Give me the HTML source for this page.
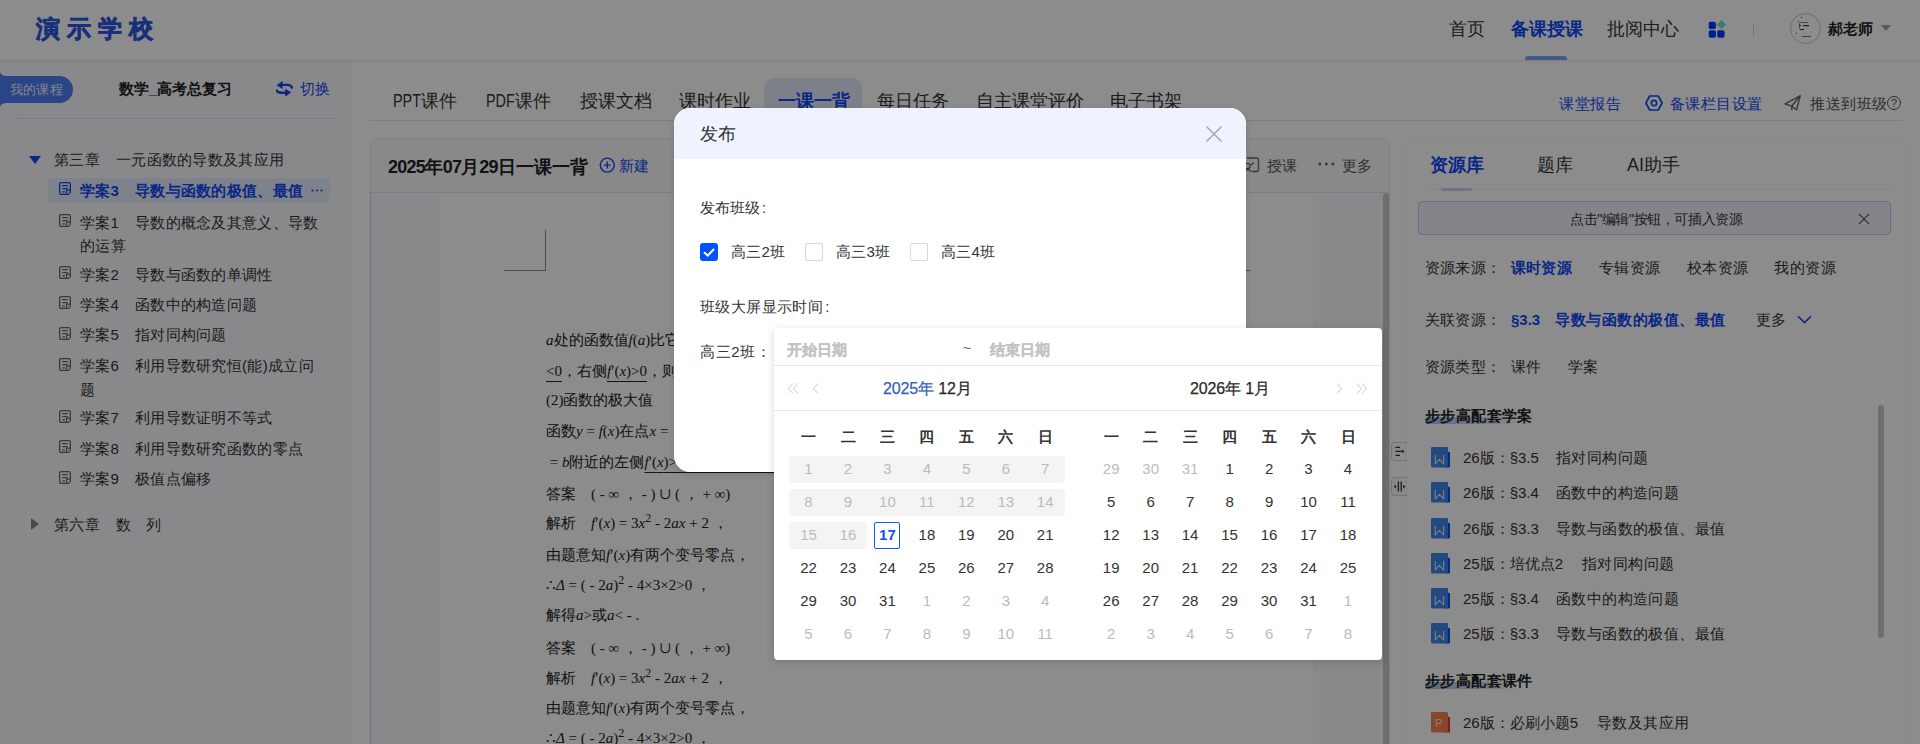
<!DOCTYPE html>
<html><head><meta charset="utf-8">
<style>
*{box-sizing:border-box;margin:0;padding:0}
html,body{width:1920px;height:744px;overflow:hidden}
body{position:relative;background:#fff;font-family:"Liberation Sans",sans-serif;color:#333;font-size:15px;line-height:1}
.a{position:absolute;white-space:nowrap;line-height:1}
.hdr{position:absolute;left:0;top:0;width:1920px;height:60px;background:#fff;box-shadow:0 1px 3px rgba(0,0,0,.10);z-index:2}
.bold{font-weight:bold}
.side{position:absolute;left:0;top:60px;width:352px;height:684px;background:#f9fafe}
.mask{position:absolute;left:0;top:0;width:1920px;height:744px;background:rgba(0,0,0,.45);z-index:10}
.tree .a{font-size:15px;color:#333;letter-spacing:.3px}
.ic{position:absolute;width:12px;height:13px}
.card{position:absolute;left:370px;top:138px;width:1020px;height:640px;background:#f9f9fb;border-radius:8px;border:1px solid #eef0f4}
.doc{position:absolute;left:370px;top:192px;width:1020px;height:560px;background:#f8f9fd;border-top:1px solid #dfe6f2}
.page{position:absolute;left:440px;top:193px;width:873px;height:560px;background:#fff}
.dl{position:absolute;left:546px;font-size:15px;color:#222;white-space:nowrap;line-height:1;font-family:"Liberation Serif",serif}
.dl i{font-family:"Liberation Serif",serif}
.rp{position:absolute;left:1407px;top:138px;width:498px;height:620px;background:#fff;border-radius:8px;box-shadow:0 0 4px rgba(0,0,0,.06)}
.rl .a{font-size:15px;color:#333}
.wd{position:absolute;left:1431px;width:18px;height:20px}
.modal{position:absolute;left:674px;top:108px;width:572px;height:364px;background:#fff;border-radius:16px;z-index:11;overflow:hidden;box-shadow:0 2px 6px rgba(0,0,0,.12)}
.mh{position:absolute;left:0;top:0;width:572px;height:51px;background:#eef3fe}
.cb{position:absolute;width:18px;height:18px;border:1px solid #d9d9d9;border-radius:2px;background:#fff}
.dp{position:absolute;left:774px;top:328px;width:608px;height:332px;background:#fff;border-radius:4px;z-index:12;box-shadow:0 2px 8px rgba(0,0,0,.15)}
.dp .a{font-size:15px}
.wk{font-weight:bold;color:#333}
.dis{color:#bbb}
.dn{color:#333}
.b,.tree .b,.rl .b,.dp .b{color:#1249f5}
.nl{display:inline-block;transform:scaleX(.8);transform-origin:0 0;margin-right:-7px}
.nd{letter-spacing:-.8px}
.dl sup{vertical-align:0;position:relative;top:-.5em;font-size:.8em;line-height:0}
.dl u{text-decoration-thickness:1.3px;text-underline-offset:4.5px}
</style></head><body>
<div class="hdr">
  <div class="a bold" style="left:36px;top:17px;font-size:24px;letter-spacing:7px;font-weight:900;-webkit-text-stroke:.7px #2c56e0;color:#2c56e0">演示学校</div>
  <div class="a" style="left:1449px;top:20px;font-size:18px;color:#333">首页</div>
  <div class="a b bold" style="left:1511px;top:20px;font-size:18px">备课授课</div>
  <div class="a" style="left:1525px;top:56px;width:42px;height:4px;background:#7fa0ff;border-radius:3px 3px 0 0"></div>
  <div class="a" style="left:1607px;top:20px;font-size:18px;color:#333">批阅中心</div>
  <svg class="a" style="left:1708px;top:20px" width="19" height="19" viewBox="0 0 19 19">
    <rect x="0.7" y="1.7" width="7.2" height="7.3" rx="1.8" fill="#0037ff"/>
    <rect x="0.7" y="10.3" width="7.2" height="7.5" rx="1.8" fill="#0037ff"/>
    <rect x="9.2" y="10.3" width="7.4" height="7.5" rx="1.8" fill="#0037ff"/>
    <path d="M13.4 0.4L17.6 4.6L13.4 8.8L9.2 4.6Z" fill="#6ee0cc" stroke="#6ee0cc" stroke-width="1" stroke-linejoin="round"/>
  </svg>
  <div class="a" style="left:1753px;top:23px;width:1px;height:14px;background:#c8d4ee"></div>
  <div class="a" style="left:1790px;top:13px;width:31px;height:31px;border:1px solid #b9c6e8;border-radius:50%;background:#fff"></div>
  <svg class="a" style="left:1793px;top:16px" width="26" height="26" viewBox="0 0 26 26"><g fill="#333"><rect x="8" y="1" width="1" height="1"/><rect x="5" y="5" width="1" height="1"/><rect x="7" y="6" width="8" height="1" opacity=".6"/><rect x="6" y="9" width="2" height="1"/><rect x="10" y="9" width="6" height="1.2"/><rect x="7" y="13" width="4" height="1"/><rect x="3" y="17" width="1" height="1"/><rect x="9" y="20" width="9" height="1" opacity=".7"/><rect x="6" y="7" width="1" height="6" opacity=".5"/></g></svg>
  <div class="a bold" style="left:1828px;top:21px;font-size:15px;color:#222">郝老师</div>
  <svg class="a" style="left:1881px;top:25px" width="10" height="6" viewBox="0 0 10 6"><path d="M0 0H10L5 6Z" fill="#9aa3b5"/></svg>
</div>

<div class="side"></div>
  <svg class="a" style="left:0;top:72px" width="74" height="35" viewBox="0 0 74 35">
    <path d="M0 0 Q1 4 7 4 H59.5 A13.5 13.5 0 0 1 59.5 31 H7 Q1 31 0 35Z" fill="#4b7ef5"/>
  </svg>
  <div class="a" style="left:10px;top:83px;font-size:13px;color:#eef2fc;letter-spacing:.2px">我的课程</div>
  <div class="a bold" style="left:119px;top:81px;font-size:15px;color:#222">数学_高考总复习</div>
  <svg class="a" style="left:276px;top:80px" width="17" height="17" viewBox="0 0 17 17">
    <path d="M0.5 5.3L6.6 0.9V8.9Z" fill="#1249f5"/><path d="M6 4.9H11.5Q15 5 15.9 7.6" fill="none" stroke="#1249f5" stroke-width="2.4" stroke-linecap="round"/>
    <path d="M15.3 12.3L9.2 8.8V16.8Z" fill="#1249f5"/><path d="M0.6 10.6Q1.5 12.6 5 12.7H10" fill="none" stroke="#1249f5" stroke-width="2.4" stroke-linecap="round"/>
  </svg>
  <div class="a b" style="left:300px;top:81px;font-size:15px">切换</div>
  <div class="a" style="left:17px;top:118px;width:319px;height:1px;background:#dde5f3"></div>
<div class="tree">
<svg class="a" style="left:29px;top:156px" width="12" height="8" viewBox="0 0 12 8"><path d="M0 0H12L6 8Z" fill="#1249f5"/></svg>
<div class="a" style="left:54px;top:152px">第三章</div><div class="a" style="left:116px;top:152px">一元函数的导数及其应用</div>
<div class="a" style="left:48px;top:178px;width:282px;height:25px;background:#e6edfb;border-radius:4px"></div>
<div class="a b bold" style="left:80px;top:183px">学案3</div><div class="a b bold" style="left:135px;top:183px">导数与函数的极值、最值</div>
<svg class="a" style="left:59px;top:182px" width="12" height="13" viewBox="0 0 12 13"><path d="M7.3 12.35H2.15Q0.65 12.35 0.65 10.85V2.15Q0.65 0.65 2.15 0.65H9.85Q11.35 0.65 11.35 2.15V8.3" fill="none" stroke="#1249f5" stroke-width="1.3"/><path d="M3.2 3.6H8.8M3.2 6.6H8.8M3.2 9.8H6" stroke="#1249f5" stroke-width="1.2"/><path d="M7.6 8.2H11.35V10.6L9.4 12.35H7.6Z" fill="none" stroke="#1249f5" stroke-width="1.2"/></svg>
<div class="a" style="left:80px;top:215px">学案1</div><div class="a" style="left:135px;top:215px">导数的概念及其意义、导数</div>
<svg class="a" style="left:59px;top:214px" width="12" height="13" viewBox="0 0 12 13"><path d="M7.3 12.35H2.15Q0.65 12.35 0.65 10.85V2.15Q0.65 0.65 2.15 0.65H9.85Q11.35 0.65 11.35 2.15V8.3" fill="none" stroke="#666" stroke-width="1.3"/><path d="M3.2 3.6H8.8M3.2 6.6H8.8M3.2 9.8H6" stroke="#666" stroke-width="1.2"/><path d="M7.6 8.2H11.35V10.6L9.4 12.35H7.6Z" fill="none" stroke="#666" stroke-width="1.2"/></svg>
<div class="a" style="left:80px;top:238px">的运算</div>
<div class="a" style="left:80px;top:267px">学案2</div><div class="a" style="left:135px;top:267px">导数与函数的单调性</div>
<svg class="a" style="left:59px;top:266px" width="12" height="13" viewBox="0 0 12 13"><path d="M7.3 12.35H2.15Q0.65 12.35 0.65 10.85V2.15Q0.65 0.65 2.15 0.65H9.85Q11.35 0.65 11.35 2.15V8.3" fill="none" stroke="#666" stroke-width="1.3"/><path d="M3.2 3.6H8.8M3.2 6.6H8.8M3.2 9.8H6" stroke="#666" stroke-width="1.2"/><path d="M7.6 8.2H11.35V10.6L9.4 12.35H7.6Z" fill="none" stroke="#666" stroke-width="1.2"/></svg>
<div class="a" style="left:80px;top:297px">学案4</div><div class="a" style="left:135px;top:297px">函数中的构造问题</div>
<svg class="a" style="left:59px;top:296px" width="12" height="13" viewBox="0 0 12 13"><path d="M7.3 12.35H2.15Q0.65 12.35 0.65 10.85V2.15Q0.65 0.65 2.15 0.65H9.85Q11.35 0.65 11.35 2.15V8.3" fill="none" stroke="#666" stroke-width="1.3"/><path d="M3.2 3.6H8.8M3.2 6.6H8.8M3.2 9.8H6" stroke="#666" stroke-width="1.2"/><path d="M7.6 8.2H11.35V10.6L9.4 12.35H7.6Z" fill="none" stroke="#666" stroke-width="1.2"/></svg>
<div class="a" style="left:80px;top:327px">学案5</div><div class="a" style="left:135px;top:327px">指对同构问题</div>
<svg class="a" style="left:59px;top:327px" width="12" height="13" viewBox="0 0 12 13"><path d="M7.3 12.35H2.15Q0.65 12.35 0.65 10.85V2.15Q0.65 0.65 2.15 0.65H9.85Q11.35 0.65 11.35 2.15V8.3" fill="none" stroke="#666" stroke-width="1.3"/><path d="M3.2 3.6H8.8M3.2 6.6H8.8M3.2 9.8H6" stroke="#666" stroke-width="1.2"/><path d="M7.6 8.2H11.35V10.6L9.4 12.35H7.6Z" fill="none" stroke="#666" stroke-width="1.2"/></svg>
<div class="a" style="left:80px;top:358px">学案6</div><div class="a" style="left:135px;top:358px">利用导数研究恒(能)成立问</div>
<svg class="a" style="left:59px;top:358px" width="12" height="13" viewBox="0 0 12 13"><path d="M7.3 12.35H2.15Q0.65 12.35 0.65 10.85V2.15Q0.65 0.65 2.15 0.65H9.85Q11.35 0.65 11.35 2.15V8.3" fill="none" stroke="#666" stroke-width="1.3"/><path d="M3.2 3.6H8.8M3.2 6.6H8.8M3.2 9.8H6" stroke="#666" stroke-width="1.2"/><path d="M7.6 8.2H11.35V10.6L9.4 12.35H7.6Z" fill="none" stroke="#666" stroke-width="1.2"/></svg>
<div class="a" style="left:80px;top:382px">题</div>
<div class="a" style="left:80px;top:410px">学案7</div><div class="a" style="left:135px;top:410px">利用导数证明不等式</div>
<svg class="a" style="left:59px;top:410px" width="12" height="13" viewBox="0 0 12 13"><path d="M7.3 12.35H2.15Q0.65 12.35 0.65 10.85V2.15Q0.65 0.65 2.15 0.65H9.85Q11.35 0.65 11.35 2.15V8.3" fill="none" stroke="#666" stroke-width="1.3"/><path d="M3.2 3.6H8.8M3.2 6.6H8.8M3.2 9.8H6" stroke="#666" stroke-width="1.2"/><path d="M7.6 8.2H11.35V10.6L9.4 12.35H7.6Z" fill="none" stroke="#666" stroke-width="1.2"/></svg>
<div class="a" style="left:80px;top:441px">学案8</div><div class="a" style="left:135px;top:441px">利用导数研究函数的零点</div>
<svg class="a" style="left:59px;top:440px" width="12" height="13" viewBox="0 0 12 13"><path d="M7.3 12.35H2.15Q0.65 12.35 0.65 10.85V2.15Q0.65 0.65 2.15 0.65H9.85Q11.35 0.65 11.35 2.15V8.3" fill="none" stroke="#666" stroke-width="1.3"/><path d="M3.2 3.6H8.8M3.2 6.6H8.8M3.2 9.8H6" stroke="#666" stroke-width="1.2"/><path d="M7.6 8.2H11.35V10.6L9.4 12.35H7.6Z" fill="none" stroke="#666" stroke-width="1.2"/></svg>
<div class="a" style="left:80px;top:471px">学案9</div><div class="a" style="left:135px;top:471px">极值点偏移</div>
<svg class="a" style="left:59px;top:471px" width="12" height="13" viewBox="0 0 12 13"><path d="M7.3 12.35H2.15Q0.65 12.35 0.65 10.85V2.15Q0.65 0.65 2.15 0.65H9.85Q11.35 0.65 11.35 2.15V8.3" fill="none" stroke="#666" stroke-width="1.3"/><path d="M3.2 3.6H8.8M3.2 6.6H8.8M3.2 9.8H6" stroke="#666" stroke-width="1.2"/><path d="M7.6 8.2H11.35V10.6L9.4 12.35H7.6Z" fill="none" stroke="#666" stroke-width="1.2"/></svg>
<svg class="a" style="left:311px;top:189px" width="12" height="3" viewBox="0 0 12 3"><circle cx="1.5" cy="1.5" r="1.1" fill="#1249f5"/><circle cx="6" cy="1.5" r="1.1" fill="#1249f5"/><circle cx="10.5" cy="1.5" r="1.1" fill="#1249f5"/></svg>
<svg class="a" style="left:31px;top:518px" width="8" height="12" viewBox="0 0 8 12"><path d="M0 0V12L8 6Z" fill="#888"/></svg>
<div class="a" style="left:54px;top:517px">第六章</div><div class="a" style="left:116px;top:517px">数</div><div class="a" style="left:146px;top:517px">列</div>
</div>


<!-- main tabs -->
<div class="a" style="left:370px;top:120px;width:1532px;height:1px;background:#dde6f4"></div>
<div class="a" style="left:764px;top:78px;width:98px;height:42px;background:#e3eafa;border-radius:10px 10px 0 0"></div>
<div class="a" style="left:393px;top:92px;font-size:18px;color:#333"><span class="nl">PPT</span>课件</div>
<div class="a" style="left:486px;top:92px;font-size:18px;color:#333"><span class="nl">PDF</span>课件</div>
<div class="a" style="left:580px;top:92px;font-size:18px;color:#333">授课文档</div>
<div class="a" style="left:679px;top:92px;font-size:18px;color:#333">课时作业</div>
<div class="a b bold" style="left:778px;top:92px;font-size:18px">一课一背</div>
<div class="a" style="left:877px;top:92px;font-size:18px;color:#333">每日任务</div>
<div class="a" style="left:976px;top:92px;font-size:18px;color:#333">自主课堂评价</div>
<div class="a" style="left:1110px;top:92px;font-size:18px;color:#333">电子书架</div>

<div class="a b" style="left:1559px;top:96px;font-size:15px;letter-spacing:.5px">课堂报告</div>
<svg class="a" style="left:1645px;top:95px" width="18" height="16" viewBox="0 0 18 16"><path d="M0.9 8L4.7 1H13.3L17.1 8L13.3 15H4.7Z" fill="none" stroke="#1249f5" stroke-width="1.7" stroke-linejoin="round"/><circle cx="9" cy="8" r="2.7" fill="none" stroke="#1249f5" stroke-width="1.7"/></svg>
<div class="a b" style="left:1670px;top:96px;font-size:15px;letter-spacing:.4px">备课栏目设置</div>
<svg class="a" style="left:1784px;top:95px" width="17" height="16" viewBox="0 0 17 16"><path d="M1 8.8L16.2 0.8L12.6 14.8L7.6 11.2Z" fill="none" stroke="#666" stroke-width="1.4" stroke-linejoin="round"/><path d="M16.2 0.8L7.6 11.2L7.9 15.2" fill="none" stroke="#666" stroke-width="1.4" stroke-linejoin="round"/></svg>
<div class="a" style="left:1810px;top:96px;font-size:15px;color:#555;letter-spacing:.5px">推送到班级</div>
<div class="a" style="left:1887px;top:96px;width:14px;height:14px;border:1.2px solid #555;border-radius:50%;font-size:11px;color:#555;text-align:center;line-height:12px">?</div>

<!-- card -->
<div class="card"></div>
<div class="a bold" style="left:388px;top:158px;font-size:18px;color:#222"><span class="nd">2025</span>年<span class="nd">07</span>月<span class="nd">29</span>日一课一背</div>
<svg class="a" style="left:599px;top:157px" width="17" height="17" viewBox="0 0 17 17"><circle cx="8.25" cy="8.1" r="7" fill="none" stroke="#1249f5" stroke-width="1.4"/><path d="M8.25 4.6V11.6M4.75 8.1H11.75" stroke="#1249f5" stroke-width="1.4"/></svg>
<div class="a b" style="left:619px;top:158px;font-size:15px">新建</div>
<svg class="a" style="left:1243px;top:157px" width="17" height="16" viewBox="0 0 17 16"><path d="M4 1H13.5Q15.5 1 15.5 3V12.5Q15.5 14.5 13.5 14.5H9" fill="none" stroke="#666" stroke-width="1.3"/><circle cx="4.5" cy="9" r="2.6" fill="none" stroke="#666" stroke-width="1.3"/><path d="M1 15Q2 12.5 4.5 12.5Q7 12.5 8 15M8 8L11 5.5" fill="none" stroke="#666" stroke-width="1.3"/></svg>
<div class="a" style="left:1267px;top:158px;font-size:15px;color:#555">授课</div>
<svg class="a" style="left:1318px;top:162px" width="17" height="4" viewBox="0 0 17 4"><circle cx="1.8" cy="2" r="1.5" fill="#666"/><circle cx="8.3" cy="2" r="1.5" fill="#666"/><circle cx="14.8" cy="2" r="1.5" fill="#666"/></svg>
<div class="a" style="left:1342px;top:158px;font-size:15px;color:#555">更多</div>
<div class="doc"></div>
<div class="a" style="left:370px;top:192px;width:1px;height:560px;background:#cdd8ee"></div>
<div class="a" style="left:1389px;top:192px;width:1px;height:560px;background:#dfe6f2"></div>
<div class="page"></div>
<div class="a" style="left:1313px;top:193px;width:70px;height:560px;background:#f8f9fd"></div>
<div class="a" style="left:1383px;top:193px;width:6px;height:560px;background:#c9c9c9;border-radius:3px"></div>
<div class="a" style="left:545px;top:230px;width:1px;height:41px;background:#8a8a8a"></div>
<div class="a" style="left:504px;top:270px;width:41px;height:1px;background:#8a8a8a"></div>
<div class="a" style="left:1208px;top:270px;width:42px;height:1px;background:#8a8a8a"></div>
<div class="dl" style="top:333px"><i>a</i>处的函数值<i>f</i>(<i>a</i>)比它附近</div>
<div class="dl" style="top:364px"><u>&lt;0</u>，右侧<u><i>f</i>′(<i>x</i>)&gt;0</u>，则</div>
<div class="dl" style="top:393px">(2)函数的极大值</div>
<div class="dl" style="top:424px">函数<i>y</i> = <i>f</i>(<i>x</i>)在点<i>x</i> = </div>
<div class="dl" style="top:455px">&nbsp;= <i>b</i>附近的左侧<u><i>f</i>′(<i>x</i>)&gt;0　　　　　　　　</u></div>
<div class="dl" style="top:487px">答案　( - ∞ ， - ) ∪ ( ， + ∞)</div>
<div class="dl" style="top:516px">解析　<i>f</i>′(<i>x</i>) = 3<i>x</i><sup>2</sup> - 2<i>ax</i> + 2 ，</div>
<div class="dl" style="top:548px">由题意知<i>f</i>′(<i>x</i>)有两个变号零点，</div>
<div class="dl" style="top:578px">∴<i>Δ</i> = ( - 2<i>a</i>)<sup>2</sup> - 4×3×2&gt;0 ，</div>
<div class="dl" style="top:608px">解得<i>a</i>&gt;或<i>a</i>&lt; - .</div>
<div class="dl" style="top:641px">答案　( - ∞ ， - ) ∪ ( ， + ∞)</div>
<div class="dl" style="top:671px">解析　<i>f</i>′(<i>x</i>) = 3<i>x</i><sup>2</sup> - 2<i>ax</i> + 2 ，</div>
<div class="dl" style="top:701px">由题意知<i>f</i>′(<i>x</i>)有两个变号零点，</div>
<div class="dl" style="top:731px">∴<i>Δ</i> = ( - 2<i>a</i>)<sup>2</sup> - 4×3×2&gt;0 ，</div>


<!-- tools -->
<div class="a" style="left:1391px;top:442px;width:17px;height:19px;border:1px solid #c9d3e6;border-right:none;border-radius:4px 0 0 4px;background:#fafbfd"></div>
<svg class="a" style="left:1394px;top:446px" width="12" height="11" viewBox="0 0 12 11"><path d="M1.5 1.4H6M1.5 5.4H8.5M1.5 9.3H6" stroke="#333" stroke-width="1.2"/><path d="M8.2 3.6L10.6 5.4L8.2 7.2Z" fill="#333"/></svg>
<div class="a" style="left:1391px;top:477px;width:17px;height:19px;border:1px solid #c9d3e6;border-right:none;border-radius:4px 0 0 4px;background:#fafbfd"></div>
<svg class="a" style="left:1393px;top:481px" width="13" height="11" viewBox="0 0 13 11"><path d="M5.4 0.6V10.6M8.2 0.6V10.6" stroke="#333" stroke-width="1.3"/><path d="M0.7 5.6L3 3.8V7.4Z M12.5 5.6L10.2 3.8V7.4Z" fill="#333"/></svg>
<!-- right panel -->
<div class="rp"></div>
<div class="a b bold" style="left:1430px;top:156px;font-size:18px">资源库</div>
<div class="a" style="left:1537px;top:156px;font-size:18px;color:#333">题库</div>
<div class="a" style="left:1627px;top:156px;font-size:18px;color:#333">AI助手</div>
<div class="a" style="left:1429px;top:189px;width:463px;height:1px;background:#eceef3"></div>
<div class="a" style="left:1441px;top:188px;width:31px;height:3px;background:#c6d3f2;border-radius:2px"></div>
<div class="a" style="left:1418px;top:201px;width:473px;height:34px;border:1px solid #b8c8f2;border-radius:4px;background:#eef2fb"></div>
<div class="a" style="left:1570px;top:212px;font-size:14px;color:#333;letter-spacing:-.4px">点击"编辑"按钮，可插入资源</div>
<svg class="a" style="left:1858px;top:213px" width="12" height="12" viewBox="0 0 12 12"><path d="M1 1L11 11M11 1L1 11" stroke="#666" stroke-width="1.3"/></svg>
<div class="rl">
<div class="a" style="left:1425px;top:260px;letter-spacing:.2px">资源来源：</div>
<div class="a b bold" style="left:1511px;top:260px;letter-spacing:.2px">课时资源</div>
<div class="a" style="left:1599px;top:260px;letter-spacing:.3px">专辑资源</div>
<div class="a" style="left:1687px;top:260px;letter-spacing:.3px">校本资源</div>
<div class="a" style="left:1774px;top:260px;letter-spacing:.5px">我的资源</div>
<div class="a" style="left:1425px;top:312px;letter-spacing:.2px">关联资源：</div>
<div class="a b bold" style="left:1511px;top:312px">§3.3</div>
<div class="a b bold" style="left:1555px;top:312px;letter-spacing:.5px">导数与函数的极值、最值</div>
<div class="a" style="left:1756px;top:312px;letter-spacing:.3px">更多</div>
<div class="a" style="left:1425px;top:359px;letter-spacing:.2px">资源类型：</div>
<div class="a" style="left:1511px;top:359px">课件</div>
<div class="a" style="left:1568px;top:359px">学案</div>
<div class="a" style="left:1425px;top:417px;width:93px;height:7px;background:linear-gradient(90deg,#a9bdf2,#cdd9f7 60%,rgba(230,236,252,0));border-radius:4px"></div>
<div class="a bold" style="left:1425px;top:408px;color:#222;letter-spacing:.4px">步步高配套学案</div>
<div class="a" style="left:1463px;top:450px">26版：§3.5</div><div class="a" style="left:1556px;top:450px;letter-spacing:.4px">指对同构问题</div>
<div class="a" style="left:1463px;top:485px">26版：§3.4</div><div class="a" style="left:1556px;top:485px;letter-spacing:.4px">函数中的构造问题</div>
<div class="a" style="left:1463px;top:521px">26版：§3.3</div><div class="a" style="left:1556px;top:521px;letter-spacing:.4px">导数与函数的极值、最值</div>
<div class="a" style="left:1463px;top:556px">25版：培优点2</div><div class="a" style="left:1582px;top:556px;letter-spacing:.4px">指对同构问题</div>
<div class="a" style="left:1463px;top:591px">25版：§3.4</div><div class="a" style="left:1556px;top:591px;letter-spacing:.4px">函数中的构造问题</div>
<div class="a" style="left:1463px;top:626px">25版：§3.3</div><div class="a" style="left:1556px;top:626px;letter-spacing:.4px">导数与函数的极值、最值</div>
<div class="a" style="left:1463px;top:715px">26版：必刷小题5</div><div class="a" style="left:1597px;top:715px;letter-spacing:.4px">导数及其应用</div>
<div class="a" style="left:1425px;top:682px;width:93px;height:7px;background:linear-gradient(90deg,#a9bdf2,#cdd9f7 60%,rgba(230,236,252,0));border-radius:4px"></div>
<div class="a bold" style="left:1425px;top:673px;color:#222;letter-spacing:.4px">步步高配套课件</div>
</div>
<svg class="a" style="left:1797px;top:315px" width="15" height="9" viewBox="0 0 15 9"><path d="M1 1.2L7.5 7.6L14 1.2" fill="none" stroke="#1249f5" stroke-width="1.6"/></svg>
<svg class="a" style="left:1431px;top:447px" width="19" height="21" viewBox="0 0 19 21"><rect x="14" y="4.8" width="5" height="15.6" rx="1.2" fill="#0a4df2"/><rect x="0" y="0" width="17" height="20.4" rx="1.3" fill="#3f86ea"/><path d="M4.3 8V17L8.4 12.3L12.6 17V8" fill="none" stroke="#e3ecf8" stroke-width="1.1" stroke-linejoin="round"/></svg>
<svg class="a" style="left:1431px;top:482px" width="19" height="21" viewBox="0 0 19 21"><rect x="14" y="4.8" width="5" height="15.6" rx="1.2" fill="#0a4df2"/><rect x="0" y="0" width="17" height="20.4" rx="1.3" fill="#3f86ea"/><path d="M4.3 8V17L8.4 12.3L12.6 17V8" fill="none" stroke="#e3ecf8" stroke-width="1.1" stroke-linejoin="round"/></svg>
<svg class="a" style="left:1431px;top:518px" width="19" height="21" viewBox="0 0 19 21"><rect x="14" y="4.8" width="5" height="15.6" rx="1.2" fill="#0a4df2"/><rect x="0" y="0" width="17" height="20.4" rx="1.3" fill="#3f86ea"/><path d="M4.3 8V17L8.4 12.3L12.6 17V8" fill="none" stroke="#e3ecf8" stroke-width="1.1" stroke-linejoin="round"/></svg>
<svg class="a" style="left:1431px;top:553px" width="19" height="21" viewBox="0 0 19 21"><rect x="14" y="4.8" width="5" height="15.6" rx="1.2" fill="#0a4df2"/><rect x="0" y="0" width="17" height="20.4" rx="1.3" fill="#3f86ea"/><path d="M4.3 8V17L8.4 12.3L12.6 17V8" fill="none" stroke="#e3ecf8" stroke-width="1.1" stroke-linejoin="round"/></svg>
<svg class="a" style="left:1431px;top:588px" width="19" height="21" viewBox="0 0 19 21"><rect x="14" y="4.8" width="5" height="15.6" rx="1.2" fill="#0a4df2"/><rect x="0" y="0" width="17" height="20.4" rx="1.3" fill="#3f86ea"/><path d="M4.3 8V17L8.4 12.3L12.6 17V8" fill="none" stroke="#e3ecf8" stroke-width="1.1" stroke-linejoin="round"/></svg>
<svg class="a" style="left:1431px;top:623px" width="19" height="21" viewBox="0 0 19 21"><rect x="14" y="4.8" width="5" height="15.6" rx="1.2" fill="#0a4df2"/><rect x="0" y="0" width="17" height="20.4" rx="1.3" fill="#3f86ea"/><path d="M4.3 8V17L8.4 12.3L12.6 17V8" fill="none" stroke="#e3ecf8" stroke-width="1.1" stroke-linejoin="round"/></svg>
<svg class="a" style="left:1431px;top:712px" width="19" height="21" viewBox="0 0 19 21"><rect x="14" y="4.8" width="5" height="15.6" rx="1.2" fill="#e53a22"/><rect x="0" y="0" width="17" height="20.4" rx="1.3" fill="#f48150"/><text x="7.6" y="15.2" font-size="11" fill="#fbe3d8" text-anchor="middle" font-family="Liberation Sans">P</text></svg>

<div class="a" style="left:1878px;top:405px;width:6px;height:233px;background:#c9c9c9;border-radius:3px"></div>

<div class="mask"></div>
<div class="modal"><div class="mh"></div></div>
<div class="a" style="left:700px;top:125px;font-size:18px;color:#333;z-index:12">发布</div>
<svg class="a" style="left:1205px;top:125px;z-index:12" width="18" height="18" viewBox="0 0 18 18"><path d="M1.5 1.5L16.5 16.5M16.5 1.5L1.5 16.5" stroke="#a3abbd" stroke-width="1.6"/></svg>
<div class="a" style="left:700px;top:200px;font-size:15px;color:#333;z-index:12">发布班级<span style="margin-left:2px">:</span></div>
<div class="a" style="left:700px;top:243px;width:18px;height:18px;background:#0052ff;border-radius:3px;z-index:12"></div>
<svg class="a" style="left:700px;top:243px;z-index:12" width="18" height="18" viewBox="0 0 18 18"><path d="M4 9.2L7.7 12.6L14 6" fill="none" stroke="#fff" stroke-width="2"/></svg>
<div class="a" style="left:731px;top:244px;font-size:15px;color:#333;z-index:12;letter-spacing:.3px">高三2班</div>
<div class="cb" style="left:805px;top:243px;z-index:12"></div>
<div class="a" style="left:836px;top:244px;font-size:15px;color:#333;z-index:12;letter-spacing:.3px">高三3班</div>
<div class="cb" style="left:910px;top:243px;z-index:12"></div>
<div class="a" style="left:941px;top:244px;font-size:15px;color:#333;z-index:12;letter-spacing:.3px">高三4班</div>
<div class="a" style="left:700px;top:299px;font-size:15px;color:#333;z-index:12;letter-spacing:.4px">班级大屏显示时间<span style="margin-left:2px">:</span></div>
<div class="a" style="left:700px;top:344px;font-size:15px;color:#333;z-index:12;letter-spacing:.6px">高三2班：</div>
<div class="dp"><div class="a bold" style="left:13px;top:14px;font-size:15px;color:#c3c3c3;-webkit-text-stroke:.3px #c3c3c3">开始日期</div><div class="a" style="left:189px;top:13px;font-size:14px;color:#666">~</div><div class="a bold" style="left:216px;top:14px;font-size:15px;color:#c3c3c3;-webkit-text-stroke:.3px #c3c3c3">结束日期</div><div class="a" style="left:0;top:37px;width:608px;height:1px;background:#e8e8e8"></div><div class="a" style="left:0;top:82px;width:608px;height:1px;background:#e8e8e8"></div><svg class="a" style="left:13px;top:55px" width="34" height="11" viewBox="0 0 34 11"><path d="M6 0.5L1.5 5.5L6 10.5M11 0.5L6.5 5.5L11 10.5M31 0.5L26.5 5.5L31 10.5" fill="none" stroke="#c8c8c8" stroke-width="1"/></svg><svg class="a" style="left:561px;top:55px" width="34" height="11" viewBox="0 0 34 11"><path d="M2 0.5L6.5 5.5L2 10.5M22 0.5L26.5 5.5L22 10.5M27 0.5L31.5 5.5L27 10.5" fill="none" stroke="#c8c8c8" stroke-width="1"/></svg><div class="a" style="left:109px;top:53px;font-size:16px;color:#2a2a2a;letter-spacing:-.15px;-webkit-text-stroke:.25px #2a2a2a"><span style="color:#3562b8;-webkit-text-stroke:.25px #3562b8">2025年</span> 12月</div><div class="a" style="left:416px;top:53px;font-size:16px;color:#2a2a2a;letter-spacing:-.15px;-webkit-text-stroke:.25px #2a2a2a">2026年 1月</div><div class="a wk" style="left:24.5px;top:101px;width:20px;text-align:center;font-size:15px">一</div><div class="a wk" style="left:64.0px;top:101px;width:20px;text-align:center;font-size:15px">二</div><div class="a wk" style="left:103.4px;top:101px;width:20px;text-align:center;font-size:15px">三</div><div class="a wk" style="left:142.9px;top:101px;width:20px;text-align:center;font-size:15px">四</div><div class="a wk" style="left:182.3px;top:101px;width:20px;text-align:center;font-size:15px">五</div><div class="a wk" style="left:221.8px;top:101px;width:20px;text-align:center;font-size:15px">六</div><div class="a wk" style="left:261.2px;top:101px;width:20px;text-align:center;font-size:15px">日</div><div class="a wk" style="left:327.2px;top:101px;width:20px;text-align:center;font-size:15px">一</div><div class="a wk" style="left:366.7px;top:101px;width:20px;text-align:center;font-size:15px">二</div><div class="a wk" style="left:406.1px;top:101px;width:20px;text-align:center;font-size:15px">三</div><div class="a wk" style="left:445.6px;top:101px;width:20px;text-align:center;font-size:15px">四</div><div class="a wk" style="left:485.1px;top:101px;width:20px;text-align:center;font-size:15px">五</div><div class="a wk" style="left:524.5px;top:101px;width:20px;text-align:center;font-size:15px">六</div><div class="a wk" style="left:564.0px;top:101px;width:20px;text-align:center;font-size:15px">日</div><div class="a" style="left:15px;top:128px;width:276px;height:27px;background:#f4f4f4;border-radius:4px"></div><div class="a" style="left:15px;top:161px;width:276px;height:27px;background:#f4f4f4;border-radius:4px"></div><div class="a" style="left:15px;top:194px;width:78px;height:27px;background:#f4f4f4;border-radius:4px"></div><div class="a" style="left:100px;top:194px;width:26px;height:27px;border:1.5px solid #1557f0;border-radius:2px"></div><div class="a dis" style="left:19.5px;top:133px;width:30px;text-align:center;">1</div><div class="a dis" style="left:59.0px;top:133px;width:30px;text-align:center;">2</div><div class="a dis" style="left:98.4px;top:133px;width:30px;text-align:center;">3</div><div class="a dis" style="left:137.9px;top:133px;width:30px;text-align:center;">4</div><div class="a dis" style="left:177.3px;top:133px;width:30px;text-align:center;">5</div><div class="a dis" style="left:216.8px;top:133px;width:30px;text-align:center;">6</div><div class="a dis" style="left:256.2px;top:133px;width:30px;text-align:center;">7</div><div class="a dis" style="left:19.5px;top:166px;width:30px;text-align:center;">8</div><div class="a dis" style="left:59.0px;top:166px;width:30px;text-align:center;">9</div><div class="a dis" style="left:98.4px;top:166px;width:30px;text-align:center;">10</div><div class="a dis" style="left:137.9px;top:166px;width:30px;text-align:center;">11</div><div class="a dis" style="left:177.3px;top:166px;width:30px;text-align:center;">12</div><div class="a dis" style="left:216.8px;top:166px;width:30px;text-align:center;">13</div><div class="a dis" style="left:256.2px;top:166px;width:30px;text-align:center;">14</div><div class="a dis" style="left:19.5px;top:199px;width:30px;text-align:center;">15</div><div class="a dis" style="left:59.0px;top:199px;width:30px;text-align:center;">16</div><div class="a dn" style="left:98.4px;top:199px;width:30px;text-align:center;font-weight:bold;color:#1452e6;">17</div><div class="a dn" style="left:137.9px;top:199px;width:30px;text-align:center;">18</div><div class="a dn" style="left:177.3px;top:199px;width:30px;text-align:center;">19</div><div class="a dn" style="left:216.8px;top:199px;width:30px;text-align:center;">20</div><div class="a dn" style="left:256.2px;top:199px;width:30px;text-align:center;">21</div><div class="a dn" style="left:19.5px;top:232px;width:30px;text-align:center;">22</div><div class="a dn" style="left:59.0px;top:232px;width:30px;text-align:center;">23</div><div class="a dn" style="left:98.4px;top:232px;width:30px;text-align:center;">24</div><div class="a dn" style="left:137.9px;top:232px;width:30px;text-align:center;">25</div><div class="a dn" style="left:177.3px;top:232px;width:30px;text-align:center;">26</div><div class="a dn" style="left:216.8px;top:232px;width:30px;text-align:center;">27</div><div class="a dn" style="left:256.2px;top:232px;width:30px;text-align:center;">28</div><div class="a dn" style="left:19.5px;top:265px;width:30px;text-align:center;">29</div><div class="a dn" style="left:59.0px;top:265px;width:30px;text-align:center;">30</div><div class="a dn" style="left:98.4px;top:265px;width:30px;text-align:center;">31</div><div class="a dis" style="left:137.9px;top:265px;width:30px;text-align:center;">1</div><div class="a dis" style="left:177.3px;top:265px;width:30px;text-align:center;">2</div><div class="a dis" style="left:216.8px;top:265px;width:30px;text-align:center;">3</div><div class="a dis" style="left:256.2px;top:265px;width:30px;text-align:center;">4</div><div class="a dis" style="left:19.5px;top:298px;width:30px;text-align:center;">5</div><div class="a dis" style="left:59.0px;top:298px;width:30px;text-align:center;">6</div><div class="a dis" style="left:98.4px;top:298px;width:30px;text-align:center;">7</div><div class="a dis" style="left:137.9px;top:298px;width:30px;text-align:center;">8</div><div class="a dis" style="left:177.3px;top:298px;width:30px;text-align:center;">9</div><div class="a dis" style="left:216.8px;top:298px;width:30px;text-align:center;">10</div><div class="a dis" style="left:256.2px;top:298px;width:30px;text-align:center;">11</div><div class="a dis" style="left:322.2px;top:133px;width:30px;text-align:center;">29</div><div class="a dis" style="left:361.7px;top:133px;width:30px;text-align:center;">30</div><div class="a dis" style="left:401.1px;top:133px;width:30px;text-align:center;">31</div><div class="a dn" style="left:440.6px;top:133px;width:30px;text-align:center;">1</div><div class="a dn" style="left:480.1px;top:133px;width:30px;text-align:center;">2</div><div class="a dn" style="left:519.5px;top:133px;width:30px;text-align:center;">3</div><div class="a dn" style="left:559.0px;top:133px;width:30px;text-align:center;">4</div><div class="a dn" style="left:322.2px;top:166px;width:30px;text-align:center;">5</div><div class="a dn" style="left:361.7px;top:166px;width:30px;text-align:center;">6</div><div class="a dn" style="left:401.1px;top:166px;width:30px;text-align:center;">7</div><div class="a dn" style="left:440.6px;top:166px;width:30px;text-align:center;">8</div><div class="a dn" style="left:480.1px;top:166px;width:30px;text-align:center;">9</div><div class="a dn" style="left:519.5px;top:166px;width:30px;text-align:center;">10</div><div class="a dn" style="left:559.0px;top:166px;width:30px;text-align:center;">11</div><div class="a dn" style="left:322.2px;top:199px;width:30px;text-align:center;">12</div><div class="a dn" style="left:361.7px;top:199px;width:30px;text-align:center;">13</div><div class="a dn" style="left:401.1px;top:199px;width:30px;text-align:center;">14</div><div class="a dn" style="left:440.6px;top:199px;width:30px;text-align:center;">15</div><div class="a dn" style="left:480.1px;top:199px;width:30px;text-align:center;">16</div><div class="a dn" style="left:519.5px;top:199px;width:30px;text-align:center;">17</div><div class="a dn" style="left:559.0px;top:199px;width:30px;text-align:center;">18</div><div class="a dn" style="left:322.2px;top:232px;width:30px;text-align:center;">19</div><div class="a dn" style="left:361.7px;top:232px;width:30px;text-align:center;">20</div><div class="a dn" style="left:401.1px;top:232px;width:30px;text-align:center;">21</div><div class="a dn" style="left:440.6px;top:232px;width:30px;text-align:center;">22</div><div class="a dn" style="left:480.1px;top:232px;width:30px;text-align:center;">23</div><div class="a dn" style="left:519.5px;top:232px;width:30px;text-align:center;">24</div><div class="a dn" style="left:559.0px;top:232px;width:30px;text-align:center;">25</div><div class="a dn" style="left:322.2px;top:265px;width:30px;text-align:center;">26</div><div class="a dn" style="left:361.7px;top:265px;width:30px;text-align:center;">27</div><div class="a dn" style="left:401.1px;top:265px;width:30px;text-align:center;">28</div><div class="a dn" style="left:440.6px;top:265px;width:30px;text-align:center;">29</div><div class="a dn" style="left:480.1px;top:265px;width:30px;text-align:center;">30</div><div class="a dn" style="left:519.5px;top:265px;width:30px;text-align:center;">31</div><div class="a dis" style="left:559.0px;top:265px;width:30px;text-align:center;">1</div><div class="a dis" style="left:322.2px;top:298px;width:30px;text-align:center;">2</div><div class="a dis" style="left:361.7px;top:298px;width:30px;text-align:center;">3</div><div class="a dis" style="left:401.1px;top:298px;width:30px;text-align:center;">4</div><div class="a dis" style="left:440.6px;top:298px;width:30px;text-align:center;">5</div><div class="a dis" style="left:480.1px;top:298px;width:30px;text-align:center;">6</div><div class="a dis" style="left:519.5px;top:298px;width:30px;text-align:center;">7</div><div class="a dis" style="left:559.0px;top:298px;width:30px;text-align:center;">8</div></div>
</body></html>
